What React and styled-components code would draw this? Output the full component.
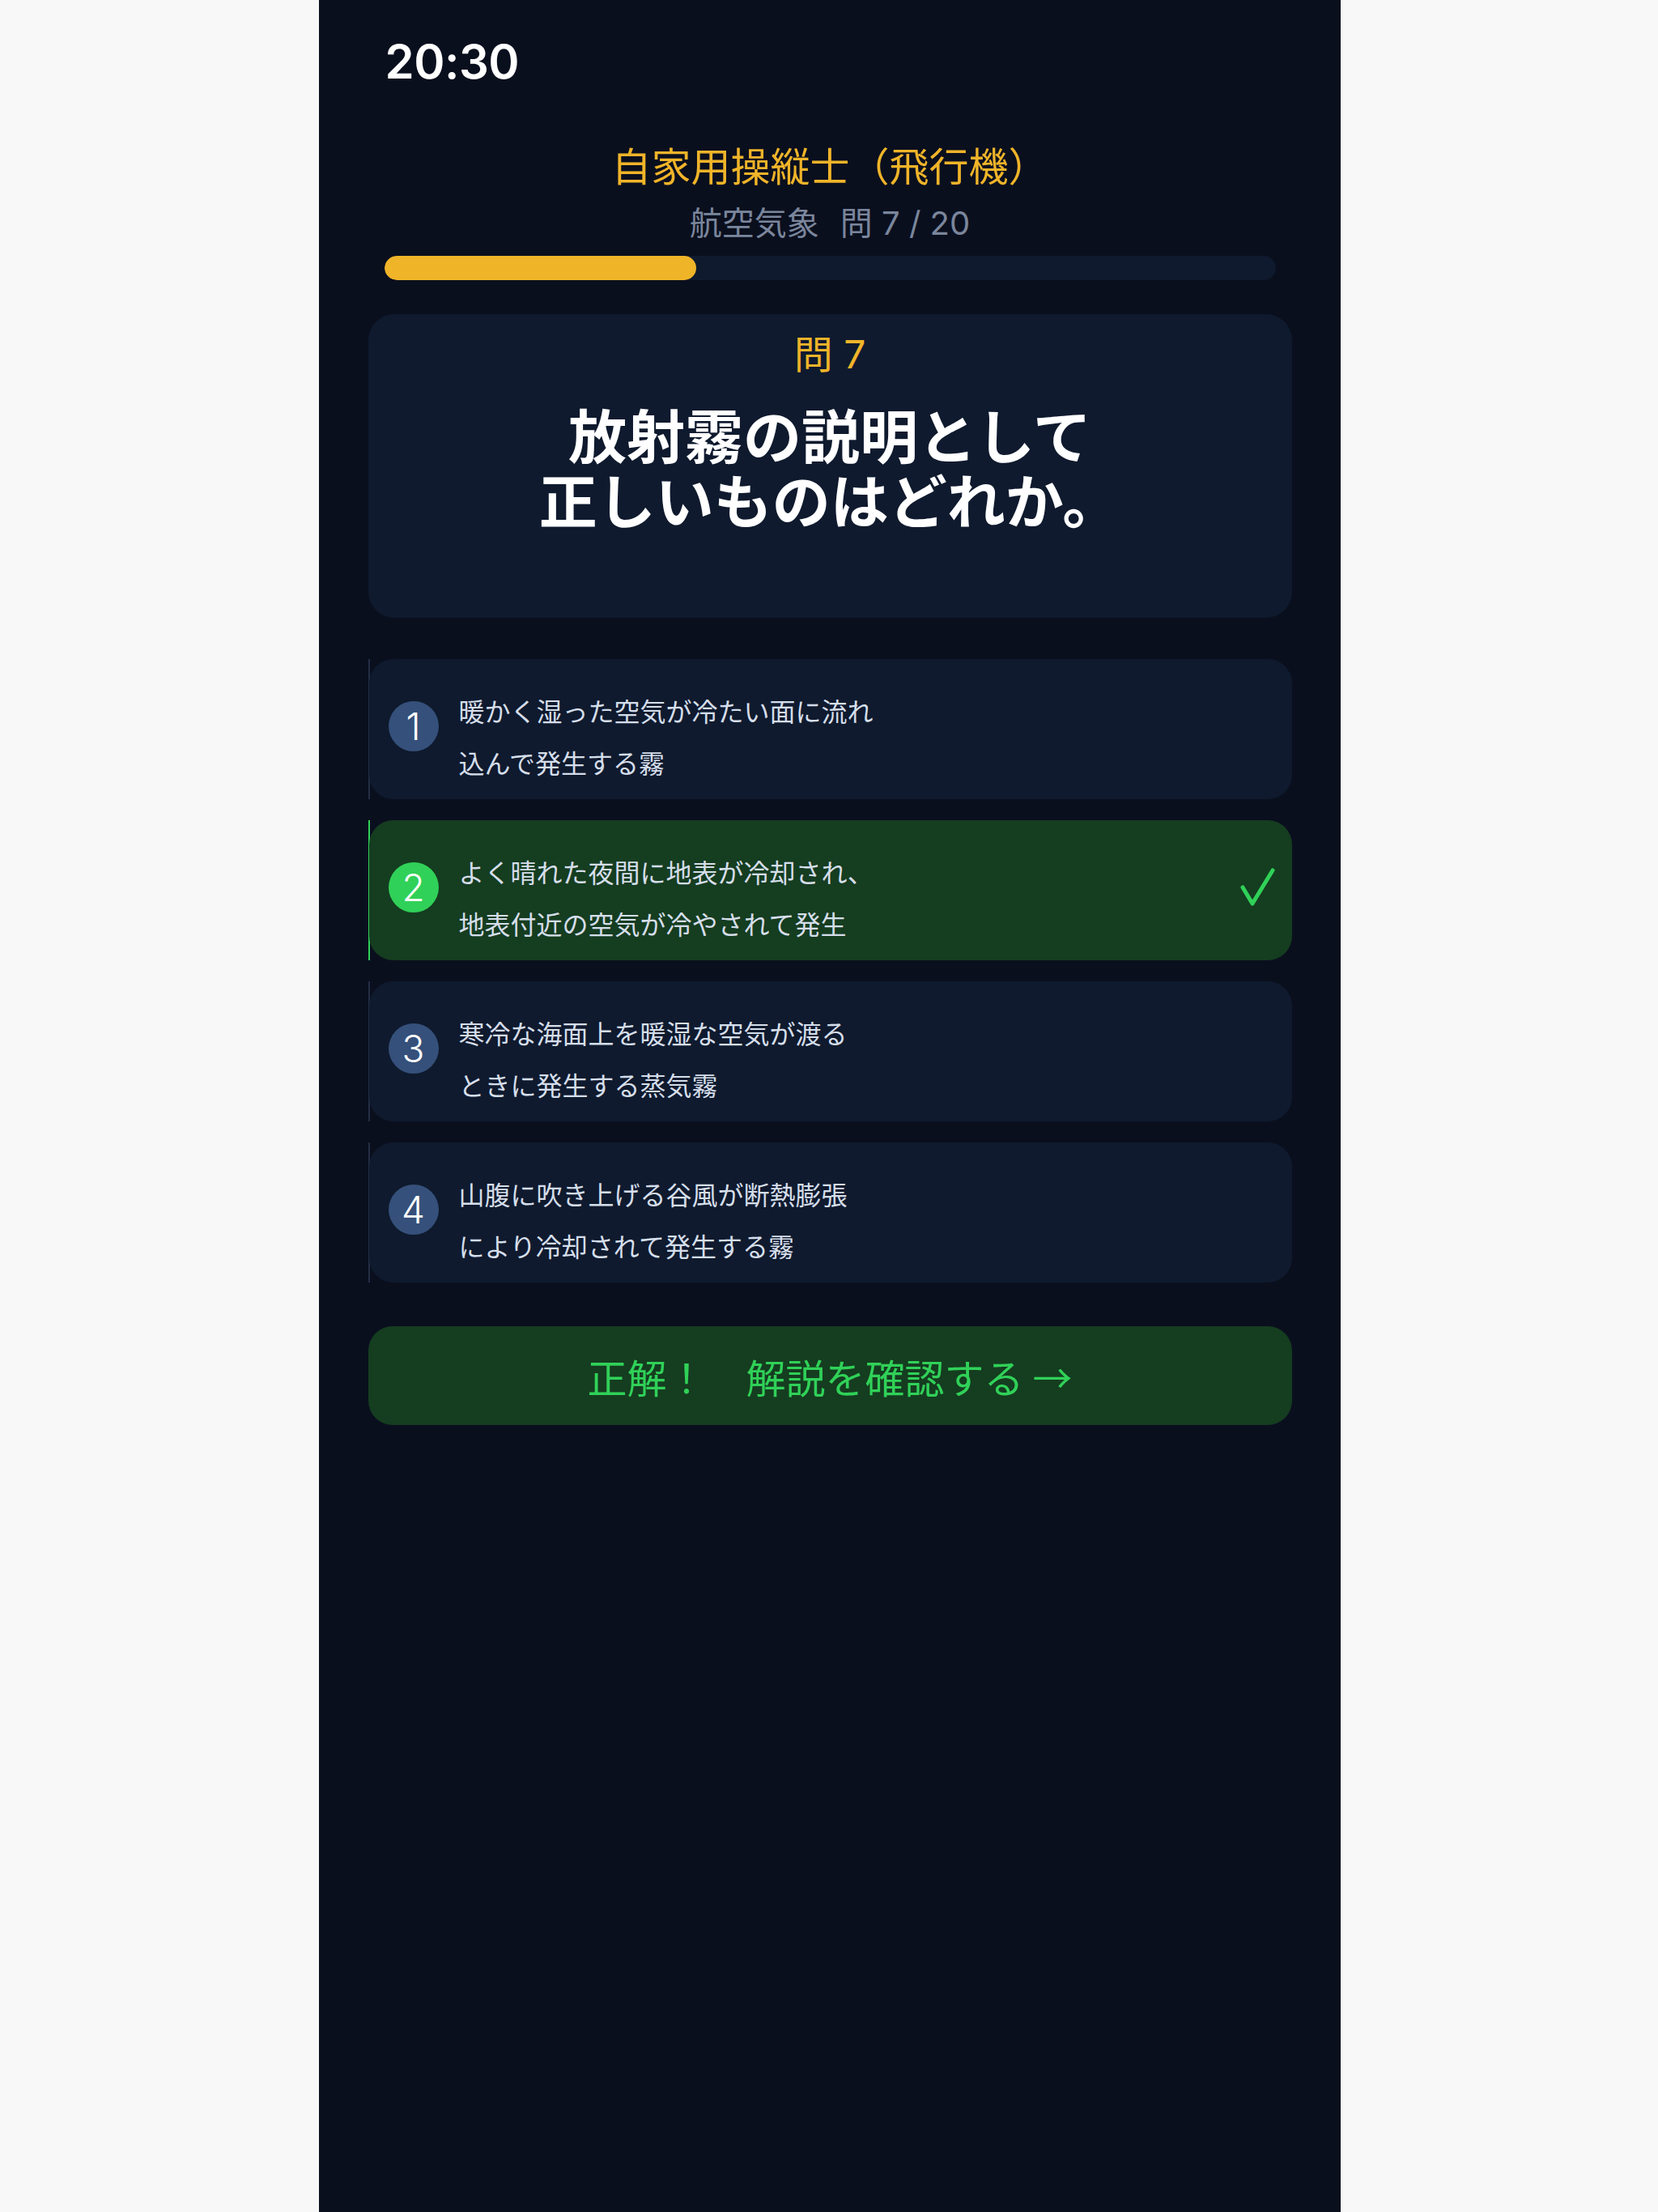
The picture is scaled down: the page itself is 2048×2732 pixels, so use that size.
import React from 'react';
import styled, { createGlobalStyle } from 'styled-components';

const COLORS = {
  page: '#f8f8f8',
  screen: '#0a0f1e',
  card: '#0f1a2e',
  circle: '#35507a',
  green: '#30d158',
  greenCard: '#153d20',
  yellow: '#f0b429',
  muted: '#7a869c',
  text: '#d5deea',
  white: '#ffffff',
  rule: '#232e44',
};

const JP = `"Noto Sans CJK JP", "Noto Sans", sans-serif`;
const MIXED = `Inter, "Noto Sans CJK JP", sans-serif`;

const OPTIONS = [
  { id: 1, lines: ['暖かく湿った空気が冷たい面に流れ', '込んで発生する霧'] },
  { id: 2, lines: ['よく晴れた夜間に地表が冷却され、', '地表付近の空気が冷やされて発生'], correct: true },
  { id: 3, lines: ['寒冷な海面上を暖湿な空気が渡る', 'ときに発生する蒸気霧'] },
  { id: 4, lines: ['山腹に吹き上げる谷風が断熱膨張', 'により冷却されて発生する霧'] },
];

const GlobalStyle = createGlobalStyle`
  html, body {
    margin: 0;
    padding: 0;
    background: ${COLORS.page};
  }
  * {
    box-sizing: border-box;
  }
`;

function CheckIcon() {
  return (
    <svg width="44" height="48" viewBox="0 0 44 48" fill="none">
      <path
        d="M3 25 L15 45 L40 4"
        stroke={COLORS.green}
        strokeWidth="5"
        strokeLinecap="round"
        strokeLinejoin="round"
      />
    </svg>
  );
}

function Option({ id, lines, correct }) {
  return (
    <OptionRow $correct={correct}>
      <OptionCard $correct={correct}>
        <NumberBadge $correct={correct}>{id}</NumberBadge>
        <OptionText>
          {lines.map((line) => (
            <span key={line}>{line}</span>
          ))}
        </OptionText>
        {correct && (
          <CheckWrap>
            <CheckIcon />
          </CheckWrap>
        )}
      </OptionCard>
    </OptionRow>
  );
}

export default function App() {
  return (
    <Page>
      <GlobalStyle />
      <Screen>
        <StatusBar>
          <Clock>20:30</Clock>
        </StatusBar>

        <Header>
          <ExamTitle>自家用操縦士（飛行機）</ExamTitle>
          <Progress>
            <span>航空気象</span>
            <span>問 7 / 20</span>
          </Progress>
        </Header>

        <Track>
          <Fill style={{ width: `${(7 / 20) * 100}%` }} />
        </Track>

        <QuestionCard>
          <QuestionNo>問 7</QuestionNo>
          <QuestionText>
            放射霧の説明として
            <br />
            正しいものはどれか。
          </QuestionText>
        </QuestionCard>

        <OptionList>
          {OPTIONS.map((o) => (
            <Option key={o.id} {...o} />
          ))}
        </OptionList>

        <NextButton type="button">正解！　解説を確認する →</NextButton>
      </Screen>
    </Page>
  );
}

const Page = styled.div`
  min-height: 2732px;
  display: flex;
  justify-content: center;
  padding-left: 1px;
  background: ${COLORS.page};
`;

const Screen = styled.main`
  width: 1262px;
  min-height: 2732px;
  background: ${COLORS.screen};
  display: flex;
  flex-direction: column;
  padding: 0 60px 0 61px;
`;

const StatusBar = styled.div`
  height: 112px;
  padding: 40px 0 0 21px;
`;

const Clock = styled.span`
  display: block;
  font-family: Inter, "Liberation Sans", sans-serif;
  font-weight: 600;
  font-size: 58px;
  line-height: 72px;
  letter-spacing: -0.5px;
  color: ${COLORS.white};
`;

const Header = styled.header`
  margin-top: 62px;
  display: flex;
  flex-direction: column;
  align-items: center;
  gap: 19px;
  font-family: ${JP};
`;

const ExamTitle = styled.h1`
  margin: 0;
  font-size: 49px;
  line-height: 58px;
  font-weight: 400;
  color: ${COLORS.yellow};
`;

const Progress = styled.div`
  display: flex;
  gap: 26px;
  font-family: ${MIXED};
  font-size: 40px;
  line-height: 50px;
  color: ${COLORS.muted};
`;

const Track = styled.div`
  margin: 15px 20px 0;
  height: 30px;
  border-radius: 15px;
  background: ${COLORS.card};
  overflow: hidden;
`;

const Fill = styled.div`
  height: 100%;
  border-radius: 15px;
  background: ${COLORS.yellow};
`;

const QuestionCard = styled.section`
  margin-top: 42px;
  height: 375px;
  padding-top: 21px;
  border-radius: 32px;
  background: ${COLORS.card};
  display: flex;
  flex-direction: column;
  align-items: center;
  font-family: ${JP};
`;

const QuestionNo = styled.div`
  font-family: ${MIXED};
  font-size: 48px;
  line-height: 58px;
  color: ${COLORS.yellow};
`;

const QuestionText = styled.h2`
  margin: 28px 0 0;
  font-size: 72px;
  line-height: 80px;
  font-weight: 700;
  text-align: center;
  color: ${COLORS.white};
`;

const OptionList = styled.div`
  margin-top: 51px;
  display: flex;
  flex-direction: column;
  gap: 26px;
`;

const OptionRow = styled.div`
  border-left: 2px solid ${(p) => (p.$correct ? COLORS.green : COLORS.rule)};
`;

const OptionCard = styled.div`
  height: 173px;
  margin-left: -1px;
  border-radius: 30px;
  background: ${(p) => (p.$correct ? COLORS.greenCard : COLORS.card)};
  display: flex;
  align-items: center;
  padding: 0 20px 0 24px;
  font-family: ${JP};
`;

const NumberBadge = styled.div`
  flex: none;
  width: 62px;
  height: 62px;
  margin-top: -8px;
  border-radius: 50%;
  background: ${(p) => (p.$correct ? COLORS.green : COLORS.circle)};
  display: flex;
  align-items: center;
  justify-content: center;
  font-family: Inter, "Liberation Sans", sans-serif;
  font-weight: 300;
  font-size: 46px;
  color: ${COLORS.white};
`;

const OptionText = styled.div`
  flex: 1;
  margin-left: 25px;
  padding-top: 16px;
  display: flex;
  flex-direction: column;
  font-size: 32px;
  line-height: 64px;
  color: ${COLORS.text};
`;

const CheckWrap = styled.div`
  flex: none;
  display: flex;
  margin-top: -10px;
`;

const NextButton = styled.button`
  margin-top: 54px;
  height: 122px;
  border: none;
  border-radius: 30px;
  background: ${COLORS.greenCard};
  font-family: ${JP};
  font-size: 49px;
  color: ${COLORS.green};
  cursor: pointer;
`;
